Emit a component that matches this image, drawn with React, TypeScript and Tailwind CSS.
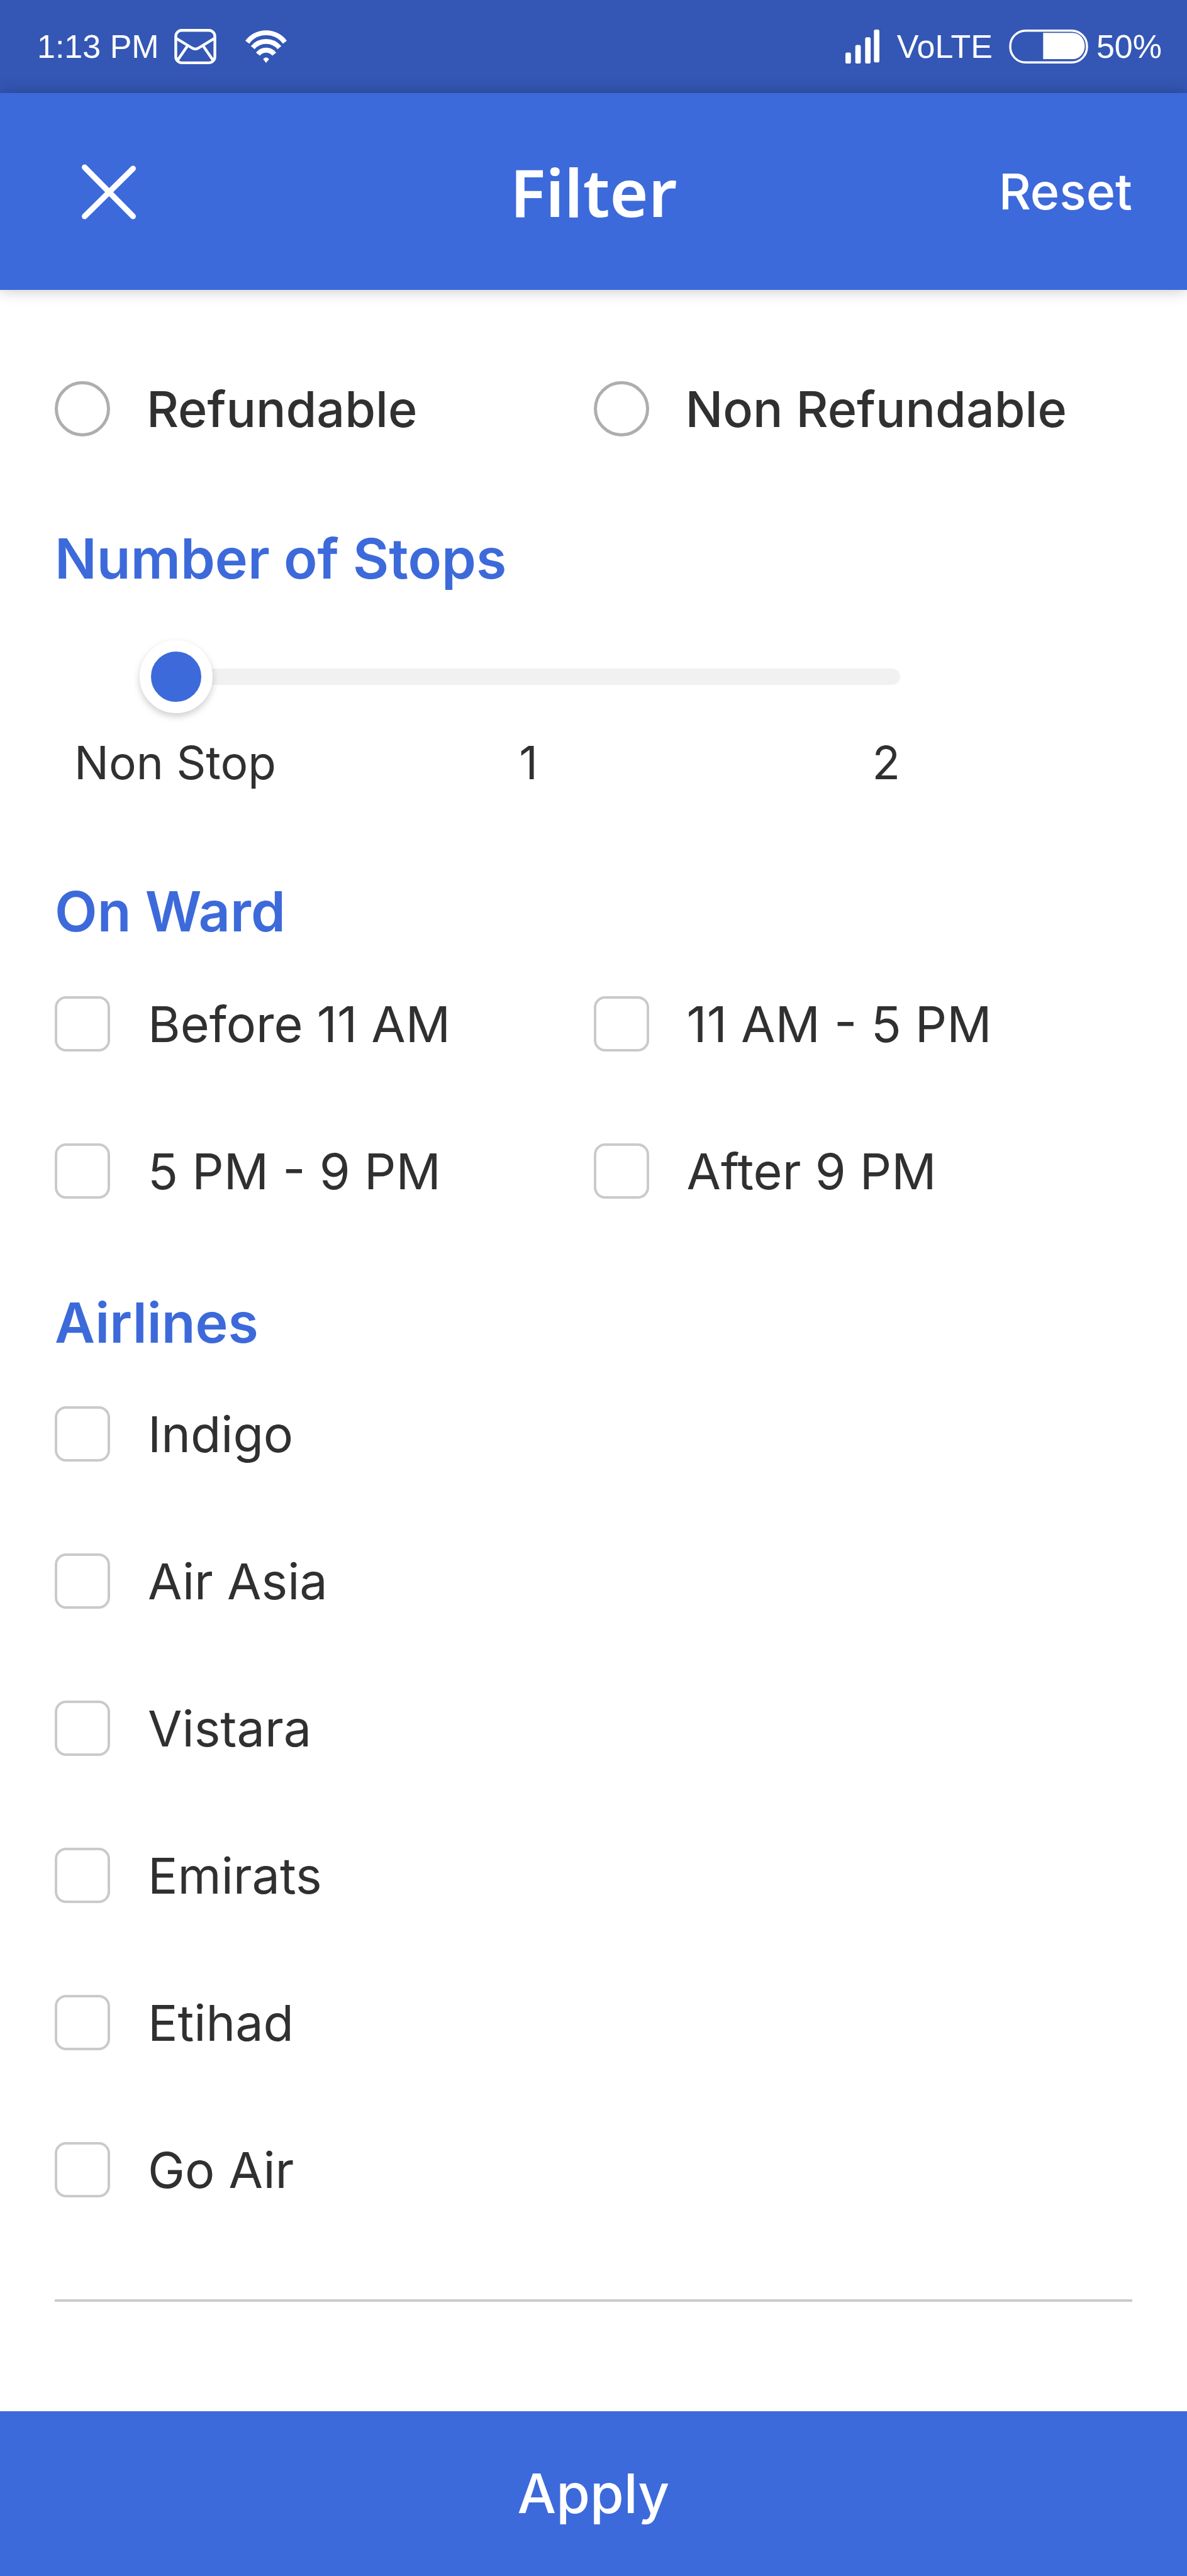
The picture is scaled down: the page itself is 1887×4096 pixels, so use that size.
import { useState } from "react";

const times = ["Before 11 AM", "11 AM - 5 PM", "5 PM - 9 PM", "After 9 PM"];
const airlines = ["Indigo", "Air Asia", "Vistara", "Emirats", "Etihad", "Go Air"];
const fares = ["Refundable", "Non Refundable"];

function CheckRow({ label }: { label: string }) {
  return (
    <label className="flex h-[88px] items-center gap-[60px] text-[79px]">
      <input
        type="checkbox"
        className="size-[88px] shrink-0 appearance-none rounded-[18px] border-4 border-[#cacaca] bg-white checked:bg-[#3d6ada]"
      />
      <span>{label}</span>
    </label>
  );
}

function Heading({ children }: { children: string }) {
  return <h2 className="text-[88px] leading-[104px] font-semibold text-[#3d6ada]">{children}</h2>;
}

function MailIcon() {
  return (
    <svg viewBox="0 0 76 64" className="h-[56px] w-[67px]" fill="none" stroke="white" strokeWidth="5" aria-hidden="true">
      <rect x="2.5" y="2.5" width="71" height="59" rx="11" />
      <path d="M3 17 L31 34 Q38 39 45 34 L73 17 M23 32 L5 58 M53 32 L71 58" />
    </svg>
  );
}

function WifiIcon() {
  return (
    <svg viewBox="0 0 75 60" className="h-[52px] w-[66px]" fill="none" stroke="white" strokeWidth="9" aria-hidden="true">
      <path d="M3 22 A43 43 0 0 1 72 22" />
      <path d="M13 32 A32 32 0 0 1 62 32" />
      <path d="M22.500 44 A19 19 0 0 1 52.500 44" />
      <path d="M32 53 Q37.500 47 43 53 L37.500 60 Z" fill="white" stroke="none" />
    </svg>
  );
}

function SignalIcon() {
  return (
    <svg viewBox="0 0 62 62" className="size-[54px]" fill="white" aria-hidden="true">
      <rect x="0" y="42" width="10" height="20" rx="3" />
      <rect x="18" y="28" width="10" height="34" rx="3" />
      <rect x="36" y="14" width="10" height="48" rx="3" />
      <rect x="52" y="0" width="10" height="60" rx="3" />
    </svg>
  );
}

function BatteryIcon() {
  return (
    <svg viewBox="0 0 144 62" className="h-[54px] w-[126px]" aria-hidden="true">
      <rect x="2" y="2" width="140" height="58" rx="28" fill="none" stroke="white" strokeWidth="4" />
      <path d="M62 6 H116 A22 24 0 0 1 116 54 H62 Z" fill="white" />
    </svg>
  );
}

export default function App() {
  const [stops, setStops] = useState(0);

  return (
    <div className="flex min-h-screen flex-col bg-white font-['Inter',sans-serif] text-[#303030]">
      <div className="flex h-[148px] items-center justify-between bg-[#3457b5] pr-[40px] pl-[59px] font-['Liberation_Sans',sans-serif] text-[52px] text-white">
        <div className="flex items-center">
          <span>1:13 PM</span>
          <span className="ml-[24px]"><MailIcon /></span>
          <span className="ml-[46px]"><WifiIcon /></span>
        </div>
        <div className="flex items-center">
          <SignalIcon />
          <span className="ml-[28px]">VoLTE</span>
          <span className="ml-[26px]"><BatteryIcon /></span>
          <span className="ml-[13px]">50%</span>
        </div>
      </div>

      <header className="grid h-[313px] grid-cols-3 items-center bg-[#3d6ada] px-[87px] text-white shadow-[0_0_24px_rgba(0,0,0,0.24)]">
        <button type="button" aria-label="Close" className="ml-[41px] justify-self-start">
          <svg viewBox="0 0 90 90" className="size-[90px]" stroke="white" strokeWidth="9" strokeLinecap="round" aria-hidden="true">
            <path d="M6.500 6 L83.500 84 M83.500 8 L6.500 84" />
          </svg>
        </button>
        <h1 className="justify-self-center font-['Noto_Sans',sans-serif] text-[105px] font-semibold">Filter</h1>
        <button type="button" className="justify-self-end text-[79px] font-medium">Reset</button>
      </header>

      <main className="flex flex-1 flex-col px-[87px] pt-[145px]">
        <div role="radiogroup" aria-label="Fare type" className="grid grid-cols-2">
          {fares.map((fare) => (
            <label key={fare} className="flex h-[88px] items-center gap-[58px] text-[79px] font-medium">
              <input
                type="radio"
                name="fare"
                className="size-[88px] shrink-0 appearance-none rounded-full border-[5px] border-[#aeaeae] checked:bg-[#3d6ada]"
              />
              <span>{fare}</span>
            </label>
          ))}
        </div>

        <section className="mt-[142px]">
          <Heading>Number of Stops</Heading>
          <div className="mt-[78px] mr-[369px] ml-[135px] flex h-[116px] items-center">
            <input
              type="range"
              min={0}
              max={2}
              step={1}
              value={stops}
              onChange={(e) => setStops(Number(e.target.value))}
              aria-label="Number of stops"
              className="h-[26px] w-full appearance-none rounded-full bg-[#f1f1f1] [&::-webkit-slider-thumb]:size-[116px] [&::-webkit-slider-thumb]:appearance-none [&::-webkit-slider-thumb]:rounded-full [&::-webkit-slider-thumb]:border-[18px] [&::-webkit-slider-thumb]:border-white [&::-webkit-slider-thumb]:bg-[#3d6ada] [&::-webkit-slider-thumb]:shadow-[0_5px_12px_rgba(0,0,0,0.2)]"
            />
          </div>
          <div className="mt-[35px] mr-[369px] ml-[31px] grid grid-cols-[25%_60%_15%] text-[73px] leading-[88px]">
            <span className="whitespace-nowrap">Non Stop</span>
            <span className="text-center">1</span>
            <span className="text-right">2</span>
          </div>
        </section>

        <section className="mt-[140px]">
          <Heading>On Ward</Heading>
          <div className="mt-[83px] grid grid-cols-2 gap-y-[146px]">
            {times.map((t) => <CheckRow key={t} label={t} />)}
          </div>
        </section>

        <section className="mt-[145px]">
          <Heading>Airlines</Heading>
          <div className="mt-[81px] grid gap-y-[146px]">
            {airlines.map((a) => <CheckRow key={a} label={a} />)}
          </div>
        </section>

        <hr className="mt-[162px] border-t-4 border-[#cacaca]" />
      </main>

      <footer>
        <button type="button" className="h-[262px] w-full bg-[#3d6ada] text-[87px] font-medium text-white">Apply</button>
      </footer>
    </div>
  );
}
